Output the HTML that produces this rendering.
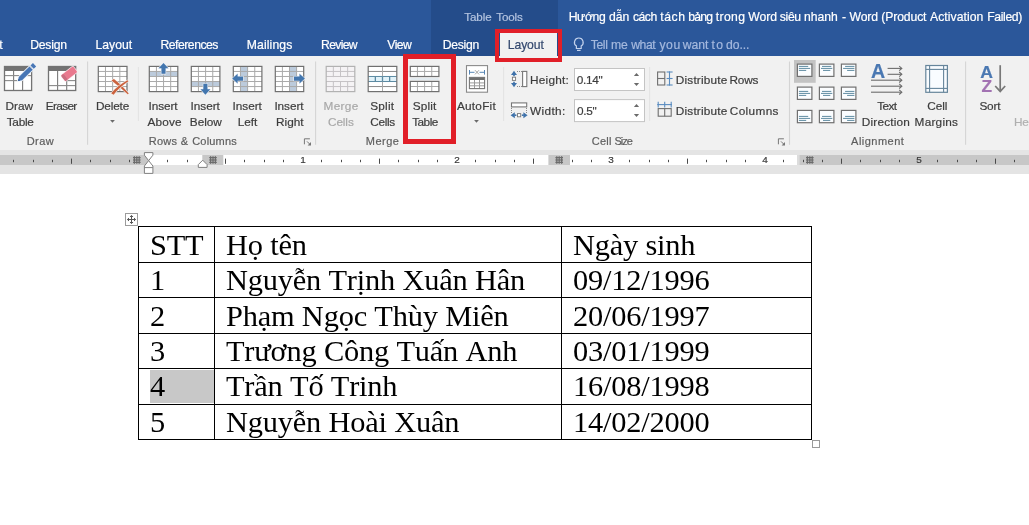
<!DOCTYPE html>
<html><head><meta charset="utf-8"><title>Word</title>
<style>
html,body{margin:0;padding:0}
body{width:1029px;height:525px;overflow:hidden;background:#fff;position:relative;font-family:"Liberation Sans",sans-serif;font-size:12px;color:#444}
.abs{position:absolute}
#title{left:0;top:0;width:1029px;height:56px;background:#2b579a}
#tt{left:430.5px;top:0;width:127.5px;height:56px;background:#244c8a}
#ribbon{left:0;top:56px;width:1029px;height:94px;background:#f1f1f1}
.l{position:absolute;white-space:pre;line-height:16px;height:16px;will-change:transform;-webkit-text-stroke:0.2px}
.rn{position:absolute;top:153.9px;width:20px;text-align:center;font-size:9.95px;line-height:11px;color:#3a3a3a;will-change:transform;-webkit-text-stroke:0.2px}
.ln{position:absolute;background:#000}
.c{position:absolute;white-space:pre;font-family:"Liberation Serif",serif;font-size:30.4px;letter-spacing:-0.19px;font-kerning:none;line-height:34px;color:#000;will-change:transform}
.red{position:absolute;border:5px solid #e11f28;box-sizing:border-box}
svg{position:absolute;left:0;top:0}
</style></head><body>
<div class="abs" id="title"></div>
<div class="abs" id="tt"></div>
<div class="abs" id="ribbon"></div>
<div class="abs" style="left:500px;top:33px;width:57px;height:24px;background:#f1f1f1"></div>
<svg width="1029" height="180" viewBox="0 0 1029 180">
<rect x="0" y="150" width="1029" height="24" fill="#e4e4e4"/>
<rect x="0" y="155" width="1029" height="10" fill="#fff"/>
<rect x="0" y="155" width="148.6" height="10" fill="#c7c7c7"/>
<rect x="202.3" y="155" width="21" height="10" fill="#c7c7c7"/>
<rect x="548.4" y="155" width="21.6" height="10" fill="#c7c7c7"/>
<rect x="799.2" y="155" width="231" height="10" fill="#c7c7c7"/>
<rect x="797" y="155" width="2.2" height="10" fill="#dcdcdc"/>
<rect x="13" y="159.8" width="1" height="2.4" fill="#4a4a4a"/>
<rect x="33" y="159.8" width="1" height="2.4" fill="#4a4a4a"/>
<rect x="52" y="159.8" width="1" height="2.4" fill="#4a4a4a"/>
<rect x="71" y="158.6" width="1" height="5.2" fill="#4a4a4a"/>
<rect x="90" y="159.8" width="1" height="2.4" fill="#4a4a4a"/>
<rect x="110" y="159.8" width="1" height="2.4" fill="#4a4a4a"/>
<rect x="129" y="159.8" width="1" height="2.4" fill="#4a4a4a"/>
<rect x="167" y="159.8" width="1" height="2.4" fill="#4a4a4a"/>
<rect x="187" y="159.8" width="1" height="2.4" fill="#4a4a4a"/>
<rect x="225" y="158.6" width="1" height="5.2" fill="#4a4a4a"/>
<rect x="244" y="159.8" width="1" height="2.4" fill="#4a4a4a"/>
<rect x="264" y="159.8" width="1" height="2.4" fill="#4a4a4a"/>
<rect x="283" y="159.8" width="1" height="2.4" fill="#4a4a4a"/>
<rect x="321" y="159.8" width="1" height="2.4" fill="#4a4a4a"/>
<rect x="341" y="159.8" width="1" height="2.4" fill="#4a4a4a"/>
<rect x="360" y="159.8" width="1" height="2.4" fill="#4a4a4a"/>
<rect x="379" y="158.6" width="1" height="5.2" fill="#4a4a4a"/>
<rect x="398" y="159.8" width="1" height="2.4" fill="#4a4a4a"/>
<rect x="418" y="159.8" width="1" height="2.4" fill="#4a4a4a"/>
<rect x="437" y="159.8" width="1" height="2.4" fill="#4a4a4a"/>
<rect x="475" y="159.8" width="1" height="2.4" fill="#4a4a4a"/>
<rect x="495" y="159.8" width="1" height="2.4" fill="#4a4a4a"/>
<rect x="514" y="159.8" width="1" height="2.4" fill="#4a4a4a"/>
<rect x="533" y="158.6" width="1" height="5.2" fill="#4a4a4a"/>
<rect x="572" y="159.8" width="1" height="2.4" fill="#4a4a4a"/>
<rect x="591" y="159.8" width="1" height="2.4" fill="#4a4a4a"/>
<rect x="629" y="159.8" width="1" height="2.4" fill="#4a4a4a"/>
<rect x="649" y="159.8" width="1" height="2.4" fill="#4a4a4a"/>
<rect x="668" y="159.8" width="1" height="2.4" fill="#4a4a4a"/>
<rect x="687" y="158.6" width="1" height="5.2" fill="#4a4a4a"/>
<rect x="706" y="159.8" width="1" height="2.4" fill="#4a4a4a"/>
<rect x="726" y="159.8" width="1" height="2.4" fill="#4a4a4a"/>
<rect x="745" y="159.8" width="1" height="2.4" fill="#4a4a4a"/>
<rect x="783" y="159.8" width="1" height="2.4" fill="#4a4a4a"/>
<rect x="803" y="159.8" width="1" height="2.4" fill="#4a4a4a"/>
<rect x="822" y="159.8" width="1" height="2.4" fill="#4a4a4a"/>
<rect x="841" y="158.6" width="1" height="5.2" fill="#4a4a4a"/>
<rect x="860" y="159.8" width="1" height="2.4" fill="#4a4a4a"/>
<rect x="880" y="159.8" width="1" height="2.4" fill="#4a4a4a"/>
<rect x="899" y="159.8" width="1" height="2.4" fill="#4a4a4a"/>
<rect x="937" y="159.8" width="1" height="2.4" fill="#4a4a4a"/>
<rect x="957" y="159.8" width="1" height="2.4" fill="#4a4a4a"/>
<rect x="976" y="159.8" width="1" height="2.4" fill="#4a4a4a"/>
<rect x="995" y="158.6" width="1" height="5.2" fill="#4a4a4a"/>
<rect x="1014" y="159.8" width="1" height="2.4" fill="#4a4a4a"/>
<line x1="134.4" y1="156.2" x2="134.4" y2="163.79999999999998" stroke="#6c6c6c" stroke-width="1.25"/>
<line x1="133" y1="157.6" x2="140.6" y2="157.6" stroke="#6c6c6c" stroke-width="1.25"/>
<line x1="136.8" y1="156.2" x2="136.8" y2="163.79999999999998" stroke="#6c6c6c" stroke-width="1.25"/>
<line x1="133" y1="160.0" x2="140.6" y2="160.0" stroke="#6c6c6c" stroke-width="1.25"/>
<line x1="139.20000000000002" y1="156.2" x2="139.20000000000002" y2="163.79999999999998" stroke="#6c6c6c" stroke-width="1.25"/>
<line x1="133" y1="162.4" x2="140.6" y2="162.4" stroke="#6c6c6c" stroke-width="1.25"/>
<line x1="210.6" y1="156.2" x2="210.6" y2="163.79999999999998" stroke="#6c6c6c" stroke-width="1.25"/>
<line x1="209.2" y1="157.6" x2="216.79999999999998" y2="157.6" stroke="#6c6c6c" stroke-width="1.25"/>
<line x1="213.0" y1="156.2" x2="213.0" y2="163.79999999999998" stroke="#6c6c6c" stroke-width="1.25"/>
<line x1="209.2" y1="160.0" x2="216.79999999999998" y2="160.0" stroke="#6c6c6c" stroke-width="1.25"/>
<line x1="215.4" y1="156.2" x2="215.4" y2="163.79999999999998" stroke="#6c6c6c" stroke-width="1.25"/>
<line x1="209.2" y1="162.4" x2="216.79999999999998" y2="162.4" stroke="#6c6c6c" stroke-width="1.25"/>
<line x1="556.8" y1="156.2" x2="556.8" y2="163.79999999999998" stroke="#6c6c6c" stroke-width="1.25"/>
<line x1="555.4" y1="157.6" x2="563.0" y2="157.6" stroke="#6c6c6c" stroke-width="1.25"/>
<line x1="559.1999999999999" y1="156.2" x2="559.1999999999999" y2="163.79999999999998" stroke="#6c6c6c" stroke-width="1.25"/>
<line x1="555.4" y1="160.0" x2="563.0" y2="160.0" stroke="#6c6c6c" stroke-width="1.25"/>
<line x1="561.5999999999999" y1="156.2" x2="561.5999999999999" y2="163.79999999999998" stroke="#6c6c6c" stroke-width="1.25"/>
<line x1="555.4" y1="162.4" x2="563.0" y2="162.4" stroke="#6c6c6c" stroke-width="1.25"/>
<line x1="807.4" y1="156.2" x2="807.4" y2="163.79999999999998" stroke="#6c6c6c" stroke-width="1.25"/>
<line x1="806" y1="157.6" x2="813.6" y2="157.6" stroke="#6c6c6c" stroke-width="1.25"/>
<line x1="809.8" y1="156.2" x2="809.8" y2="163.79999999999998" stroke="#6c6c6c" stroke-width="1.25"/>
<line x1="806" y1="160.0" x2="813.6" y2="160.0" stroke="#6c6c6c" stroke-width="1.25"/>
<line x1="812.1999999999999" y1="156.2" x2="812.1999999999999" y2="163.79999999999998" stroke="#6c6c6c" stroke-width="1.25"/>
<line x1="806" y1="162.4" x2="813.6" y2="162.4" stroke="#6c6c6c" stroke-width="1.25"/>
<path d="M144.4,152.6 L152.9,152.6 L152.9,155.2 L148.65,160.6 L152.9,166 L152.9,173.4 L144.4,173.4 L144.4,166 L148.65,160.6 L144.4,155.2 Z" fill="#fff" stroke="#808080" stroke-width="1"/>
<line x1="144.4" y1="167.6" x2="152.9" y2="167.6" stroke="#808080" stroke-width="1"/>
<path d="M198.3,167.4 L198.3,164.6 L202.7,160.2 L207.1,164.6 L207.1,167.4 Z" fill="#fff" stroke="#808080" stroke-width="1"/>
<rect x="4.5" y="66.5" width="27.1" height="24.0" fill="#fff" />
<rect x="4.5" y="66.5" width="27.1" height="4.5" fill="#737373" />
<line x1="13.6" y1="71" x2="13.6" y2="90.5" stroke="#7a7a7a" stroke-width="1.1" />
<line x1="22.6" y1="80" x2="22.6" y2="90.5" stroke="#7a7a7a" stroke-width="1.1" />
<line x1="4.5" y1="75.6" x2="20" y2="75.6" stroke="#8a8a8a" stroke-width="1.1" />
<line x1="27" y1="75.6" x2="31.6" y2="75.6" stroke="#8a8a8a" stroke-width="1.1" />
<line x1="4.5" y1="80.6" x2="17.5" y2="80.6" stroke="#8a8a8a" stroke-width="1.1" />
<rect x="4.5" y="66.5" width="27.1" height="24.0" fill="none" stroke="#737373" stroke-width="1.3" />
<g transform="translate(18,81) rotate(-44.5)"><path d="M0,0 L3.4,-2.3 L18.4,-2.3 L18.4,2.3 L3.4,2.3 Z" fill="#4876b5" stroke="#eef3f9" stroke-width="1.6" paint-order="stroke"/><rect x="19.8" y="-2.3" width="3.4" height="4.6" fill="#4876b5" stroke="#eef3f9" stroke-width="1.2" paint-order="stroke"/><path d="M0,0 L2,-1.3 L2,1.3 Z" fill="#2f5a96"/></g>
<rect x="48.5" y="66.5" width="27.200000000000003" height="24.0" fill="#fff" />
<rect x="48.5" y="66.5" width="27.200000000000003" height="4.5" fill="#737373" />
<line x1="57.6" y1="71" x2="57.6" y2="90.5" stroke="#7a7a7a" stroke-width="1.1" />
<line x1="66.7" y1="81" x2="66.7" y2="90.5" stroke="#7a7a7a" stroke-width="1.1" />
<line x1="66.7" y1="80.6" x2="75.7" y2="80.6" stroke="#8a8a8a" stroke-width="1.1" />
<line x1="48.5" y1="85.6" x2="75.7" y2="85.6" stroke="#8a8a8a" stroke-width="1.1" />
<rect x="48.5" y="66.5" width="27.200000000000003" height="24.0" fill="none" stroke="#737373" stroke-width="1.3" />
<g transform="translate(63.6,78.2) rotate(-38)"><rect x="-0.5" y="-3.6" width="15.2" height="7.2" rx="1.3" fill="#e9798e" stroke="#f8e9ed" stroke-width="1.4" paint-order="stroke"/><rect x="-0.5" y="-3.6" width="3" height="7.2" rx="1" fill="#c86f81"/></g>
<rect x="98.3" y="66.4" width="28.700000000000003" height="25.19999999999999" fill="#fff" />
<line x1="105.47" y1="66.4" x2="105.47" y2="91.6" stroke="#a9a9a9" stroke-width="1" />
<line x1="112.65" y1="66.4" x2="112.65" y2="91.6" stroke="#a9a9a9" stroke-width="1" />
<line x1="119.83" y1="66.4" x2="119.83" y2="91.6" stroke="#a9a9a9" stroke-width="1" />
<line x1="98.3" y1="71.44" x2="127" y2="71.44" stroke="#a9a9a9" stroke-width="1" />
<line x1="98.3" y1="76.48" x2="127" y2="76.48" stroke="#a9a9a9" stroke-width="1" />
<line x1="98.3" y1="81.52" x2="127" y2="81.52" stroke="#a9a9a9" stroke-width="1" />
<line x1="98.3" y1="86.56" x2="127" y2="86.56" stroke="#a9a9a9" stroke-width="1" />
<rect x="98.3" y="66.4" width="28.700000000000003" height="25.19999999999999" fill="none" stroke="#707070" stroke-width="1.2" />
<path d="M111.6,80.6 L113.9,78.9 C118.5,82.6 124.2,88 128.7,93.4 L127.8,94.3 C122.6,89.6 116.6,84.6 111.6,80.6 Z" fill="#cb623e" stroke="#f4ebe6" stroke-width="1.1" paint-order="stroke" stroke-linejoin="round"/>
<path d="M127.5,80.2 L128.4,81.2 C122.6,85 117.4,89.8 113.6,94.7 L111.2,93.2 C115.4,88.2 121.4,83.4 127.5,80.2 Z" fill="#cb623e" stroke="#f4ebe6" stroke-width="1.1" paint-order="stroke" stroke-linejoin="round"/>
<rect x="149.3" y="66.4" width="28.5" height="25.19999999999999" fill="#fff" />
<rect x="149.3" y="71.44" width="28.5" height="5.039999999999997" fill="#bccbdc" />
<line x1="156.43" y1="66.4" x2="156.43" y2="91.6" stroke="#a9a9a9" stroke-width="1" />
<line x1="163.55" y1="66.4" x2="163.55" y2="91.6" stroke="#a9a9a9" stroke-width="1" />
<line x1="170.68" y1="66.4" x2="170.68" y2="91.6" stroke="#a9a9a9" stroke-width="1" />
<line x1="149.3" y1="71.44" x2="177.8" y2="71.44" stroke="#a9a9a9" stroke-width="1" />
<line x1="149.3" y1="76.48" x2="177.8" y2="76.48" stroke="#a9a9a9" stroke-width="1" />
<line x1="149.3" y1="81.52" x2="177.8" y2="81.52" stroke="#a9a9a9" stroke-width="1" />
<line x1="149.3" y1="86.56" x2="177.8" y2="86.56" stroke="#a9a9a9" stroke-width="1" />
<rect x="149.3" y="66.4" width="28.5" height="25.19999999999999" fill="none" stroke="#707070" stroke-width="1.2" />
<g transform="translate(163.5,68.4) rotate(0)"><path d="M0,-5.5 L4.9,-0.1 L2.05,-0.1 L2.05,5.4 L-2.05,5.4 L-2.05,-0.1 L-4.9,-0.1 Z" fill="#4376ae" stroke="#eef2f7" stroke-width="1.2" stroke-linejoin="round" paint-order="stroke"/></g>
<rect x="191.3" y="66.4" width="28.599999999999994" height="25.19999999999999" fill="#fff" />
<rect x="191.3" y="81.52" width="28.599999999999994" height="5.039999999999997" fill="#bccbdc" />
<line x1="198.45" y1="66.4" x2="198.45" y2="91.6" stroke="#a9a9a9" stroke-width="1" />
<line x1="205.60" y1="66.4" x2="205.60" y2="91.6" stroke="#a9a9a9" stroke-width="1" />
<line x1="212.75" y1="66.4" x2="212.75" y2="91.6" stroke="#a9a9a9" stroke-width="1" />
<line x1="191.3" y1="71.44" x2="219.9" y2="71.44" stroke="#a9a9a9" stroke-width="1" />
<line x1="191.3" y1="76.48" x2="219.9" y2="76.48" stroke="#a9a9a9" stroke-width="1" />
<line x1="191.3" y1="81.52" x2="219.9" y2="81.52" stroke="#a9a9a9" stroke-width="1" />
<line x1="191.3" y1="86.56" x2="219.9" y2="86.56" stroke="#a9a9a9" stroke-width="1" />
<rect x="191.3" y="66.4" width="28.599999999999994" height="25.19999999999999" fill="none" stroke="#707070" stroke-width="1.2" />
<g transform="translate(205.4,89.2) rotate(180)"><path d="M0,-5.5 L4.9,-0.1 L2.05,-0.1 L2.05,5.4 L-2.05,5.4 L-2.05,-0.1 L-4.9,-0.1 Z" fill="#4376ae" stroke="#eef2f7" stroke-width="1.2" stroke-linejoin="round" paint-order="stroke"/></g>
<rect x="233.3" y="66.4" width="28.599999999999966" height="25.19999999999999" fill="#fff" />
<rect x="240.45" y="66.4" width="7.1499999999999915" height="25.19999999999999" fill="#bccbdc" />
<line x1="240.45" y1="66.4" x2="240.45" y2="91.6" stroke="#a9a9a9" stroke-width="1" />
<line x1="247.60" y1="66.4" x2="247.60" y2="91.6" stroke="#a9a9a9" stroke-width="1" />
<line x1="254.75" y1="66.4" x2="254.75" y2="91.6" stroke="#a9a9a9" stroke-width="1" />
<line x1="233.3" y1="71.44" x2="261.9" y2="71.44" stroke="#a9a9a9" stroke-width="1" />
<line x1="233.3" y1="76.48" x2="261.9" y2="76.48" stroke="#a9a9a9" stroke-width="1" />
<line x1="233.3" y1="81.52" x2="261.9" y2="81.52" stroke="#a9a9a9" stroke-width="1" />
<line x1="233.3" y1="86.56" x2="261.9" y2="86.56" stroke="#a9a9a9" stroke-width="1" />
<rect x="233.3" y="66.4" width="28.599999999999966" height="25.19999999999999" fill="none" stroke="#707070" stroke-width="1.2" />
<g transform="translate(237.7,78.6) rotate(-90)"><path d="M0,-5.5 L4.9,-0.1 L2.05,-0.1 L2.05,5.4 L-2.05,5.4 L-2.05,-0.1 L-4.9,-0.1 Z" fill="#4376ae" stroke="#eef2f7" stroke-width="1.2" stroke-linejoin="round" paint-order="stroke"/></g>
<rect x="275.3" y="66.4" width="28.399999999999977" height="25.19999999999999" fill="#fff" />
<rect x="289.5" y="66.4" width="7.099999999999994" height="25.19999999999999" fill="#bccbdc" />
<line x1="282.40" y1="66.4" x2="282.40" y2="91.6" stroke="#a9a9a9" stroke-width="1" />
<line x1="289.50" y1="66.4" x2="289.50" y2="91.6" stroke="#a9a9a9" stroke-width="1" />
<line x1="296.60" y1="66.4" x2="296.60" y2="91.6" stroke="#a9a9a9" stroke-width="1" />
<line x1="275.3" y1="71.44" x2="303.7" y2="71.44" stroke="#a9a9a9" stroke-width="1" />
<line x1="275.3" y1="76.48" x2="303.7" y2="76.48" stroke="#a9a9a9" stroke-width="1" />
<line x1="275.3" y1="81.52" x2="303.7" y2="81.52" stroke="#a9a9a9" stroke-width="1" />
<line x1="275.3" y1="86.56" x2="303.7" y2="86.56" stroke="#a9a9a9" stroke-width="1" />
<rect x="275.3" y="66.4" width="28.399999999999977" height="25.19999999999999" fill="none" stroke="#707070" stroke-width="1.2" />
<g transform="translate(299.4,78.6) rotate(90)"><path d="M0,-5.5 L4.9,-0.1 L2.05,-0.1 L2.05,5.4 L-2.05,5.4 L-2.05,-0.1 L-4.9,-0.1 Z" fill="#4376ae" stroke="#eef2f7" stroke-width="1.2" stroke-linejoin="round" paint-order="stroke"/></g>
<rect x="326.2" y="66.4" width="28.600000000000023" height="25.19999999999999" fill="#f5f3f5" />
<line x1="333.35" y1="66.4" x2="333.35" y2="91.6" stroke="#c6c3c6" stroke-width="1" />
<line x1="340.50" y1="66.4" x2="340.50" y2="91.6" stroke="#c6c3c6" stroke-width="1" />
<line x1="347.65" y1="66.4" x2="347.65" y2="91.6" stroke="#c6c3c6" stroke-width="1" />
<line x1="326.2" y1="71.44" x2="354.8" y2="71.44" stroke="#c6c3c6" stroke-width="1" />
<line x1="326.2" y1="76.48" x2="354.8" y2="76.48" stroke="#c6c3c6" stroke-width="1" />
<line x1="326.2" y1="81.52" x2="354.8" y2="81.52" stroke="#c6c3c6" stroke-width="1" />
<line x1="326.2" y1="86.56" x2="354.8" y2="86.56" stroke="#c6c3c6" stroke-width="1" />
<rect x="326.2" y="66.4" width="28.600000000000023" height="25.19999999999999" fill="none" stroke="#b2b2b2" stroke-width="1.2" />
<rect x="326.9" y="77.1" width="27.2" height="3.9" fill="#f5f3f5" />
<rect x="368.2" y="66.4" width="28.600000000000023" height="25.19999999999999" fill="#fff" />
<rect x="368.2" y="76.48" width="28.600000000000023" height="5.039999999999997" fill="#e2f3fa" />
<line x1="368.2" y1="71.44" x2="396.8" y2="71.44" stroke="#8a8a8a" stroke-width="1" />
<line x1="368.2" y1="76.48" x2="396.8" y2="76.48" stroke="#5b8aa2" stroke-width="1" />
<line x1="368.2" y1="81.52" x2="396.8" y2="81.52" stroke="#5b8aa2" stroke-width="1" />
<line x1="368.2" y1="86.56" x2="396.8" y2="86.56" stroke="#8a8a8a" stroke-width="1" />
<line x1="382.5" y1="66.4" x2="382.5" y2="76.48" stroke="#a9a9a9" stroke-width="1" />
<line x1="382.5" y1="81.52" x2="382.5" y2="91.6" stroke="#a9a9a9" stroke-width="1" />
<line x1="375.35" y1="76.48" x2="375.35" y2="81.52" stroke="#5b8aa2" stroke-width="1.3" />
<line x1="382.50" y1="76.48" x2="382.50" y2="81.52" stroke="#5b8aa2" stroke-width="1.3" />
<line x1="389.65" y1="76.48" x2="389.65" y2="81.52" stroke="#5b8aa2" stroke-width="1.3" />
<rect x="368.2" y="66.4" width="28.600000000000023" height="25.19999999999999" fill="none" stroke="#707070" stroke-width="1.2" />
<rect x="410.3" y="66.4" width="28.599999999999966" height="10.099999999999994" fill="#fff" />
<line x1="417.45" y1="66.4" x2="417.45" y2="76.5" stroke="#a9a9a9" stroke-width="1" />
<line x1="424.60" y1="66.4" x2="424.60" y2="76.5" stroke="#a9a9a9" stroke-width="1" />
<line x1="431.75" y1="66.4" x2="431.75" y2="76.5" stroke="#a9a9a9" stroke-width="1" />
<line x1="410.3" y1="71.45" x2="438.9" y2="71.45" stroke="#a9a9a9" stroke-width="1" />
<rect x="410.3" y="66.4" width="28.599999999999966" height="10.099999999999994" fill="none" stroke="#707070" stroke-width="1.2" />
<rect x="410.3" y="81.4" width="28.599999999999966" height="10.199999999999989" fill="#fff" />
<line x1="417.45" y1="81.4" x2="417.45" y2="91.6" stroke="#a9a9a9" stroke-width="1" />
<line x1="424.60" y1="81.4" x2="424.60" y2="91.6" stroke="#a9a9a9" stroke-width="1" />
<line x1="431.75" y1="81.4" x2="431.75" y2="91.6" stroke="#a9a9a9" stroke-width="1" />
<line x1="410.3" y1="86.50" x2="438.9" y2="86.50" stroke="#a9a9a9" stroke-width="1" />
<rect x="410.3" y="81.4" width="28.599999999999966" height="10.199999999999989" fill="none" stroke="#707070" stroke-width="1.2" />
<line x1="410.5" y1="79" x2="438.7" y2="79" stroke="#dbe7f0" stroke-width="1.2" />
<rect x="466.5" y="65.6" width="21" height="26.6" fill="#fff" stroke="#8a8a8a" stroke-width="1.1" />
<line x1="469.5" y1="70" x2="469.5" y2="74.6" stroke="#5786b4" stroke-width="1" />
<line x1="484.5" y1="70" x2="484.5" y2="74.6" stroke="#5786b4" stroke-width="1" />
<line x1="469.5" y1="72.3" x2="474.5" y2="72.3" stroke="#5786b4" stroke-width="1" />
<line x1="479.5" y1="72.3" x2="484.5" y2="72.3" stroke="#5786b4" stroke-width="1" />
<line x1="475" y1="70.2" x2="479" y2="74.4" stroke="#9a9a9a" stroke-width="0.9" />
<line x1="479" y1="70.2" x2="475" y2="74.4" stroke="#9a9a9a" stroke-width="0.9" />
<rect x="469.4" y="77.4" width="15.2" height="11.2" fill="#fff" />
<rect x="469.4" y="77.4" width="15.2" height="2.6" fill="#6f6f6f" />
<line x1="474.5" y1="80" x2="474.5" y2="88.6" stroke="#9a9a9a" stroke-width="1" />
<line x1="479.5" y1="80" x2="479.5" y2="88.6" stroke="#9a9a9a" stroke-width="1" />
<line x1="469.4" y1="82.9" x2="484.6" y2="82.9" stroke="#9a9a9a" stroke-width="1" />
<line x1="469.4" y1="85.8" x2="484.6" y2="85.8" stroke="#9a9a9a" stroke-width="1" />
<rect x="469.4" y="77.4" width="15.2" height="11.2" fill="none" stroke="#777" stroke-width="1.1" />
<path d="M110.1,119.89999999999999 L114.9,119.89999999999999 L112.5,122.7 Z" fill="#6a6a6a" />
<path d="M474.1,119.89999999999999 L478.9,119.89999999999999 L476.5,122.7 Z" fill="#6a6a6a" />
<path d="M514,70.8 L517,74.9 L511,74.9 Z" fill="#3f72aa" />
<line x1="514" y1="74.5" x2="514" y2="76.2" stroke="#3f72aa" stroke-width="1.6" />
<path d="M514,87.2 L517,83.1 L511,83.1 Z" fill="#3f72aa" />
<line x1="514" y1="81.8" x2="514" y2="83.5" stroke="#3f72aa" stroke-width="1.6" />
<rect x="512.4" y="77.2" width="3.2" height="3.2" fill="#fff" stroke="#777" stroke-width="0.9" />
<line x1="517" y1="71.5" x2="522" y2="71.5" stroke="#8a8a8a" stroke-width="1" stroke-dasharray="1 1" shape-rendering="crispEdges"/>
<line x1="517" y1="86.5" x2="522" y2="86.5" stroke="#8a8a8a" stroke-width="1" stroke-dasharray="1 1" shape-rendering="crispEdges"/>
<rect x="522.6" y="71.4" width="4.2" height="15.2" fill="#fff" stroke="#777" stroke-width="1.1" />
<rect x="511.5" y="102.9" width="15.2" height="4" fill="#fff" stroke="#777" stroke-width="1.1" />
<line x1="511.5" y1="108" x2="511.5" y2="113" stroke="#8a8a8a" stroke-width="1" stroke-dasharray="1 1" shape-rendering="crispEdges"/>
<line x1="526.5" y1="108" x2="526.5" y2="113" stroke="#8a8a8a" stroke-width="1" stroke-dasharray="1 1" shape-rendering="crispEdges"/>
<path d="M510.6,115.2 L514.8,112.2 L514.8,118.2 Z" fill="#3f72aa" />
<line x1="514.4" y1="115.2" x2="516.4" y2="115.2" stroke="#3f72aa" stroke-width="1.6" />
<path d="M527.6,115.2 L523.4,112.2 L523.4,118.2 Z" fill="#3f72aa" />
<line x1="521.8" y1="115.2" x2="523.8" y2="115.2" stroke="#3f72aa" stroke-width="1.6" />
<rect x="517.5" y="113.6" width="3.2" height="3.2" fill="#fff" stroke="#777" stroke-width="0.9" />
<rect x="574.5" y="68.5" width="70" height="22" fill="#fff" stroke="#c4c4c4" stroke-width="1" />
<rect x="574.5" y="99.6" width="70" height="22" fill="#fff" stroke="#c4c4c4" stroke-width="1" />
<path d="M633.9,76.0 L636.5,73.0 L639.1,76.0 Z" fill="#6a6a6a" />
<path d="M633.9,107.10000000000001 L636.5,104.10000000000001 L639.1,107.10000000000001 Z" fill="#6a6a6a" />
<path d="M633.9,83.0 L636.5,86.0 L639.1,83.0 Z" fill="#6a6a6a" />
<path d="M633.9,114.1 L636.5,117.1 L639.1,114.1 Z" fill="#6a6a6a" />
<rect x="657.6" y="72" width="7.2" height="13" fill="none" stroke="#6f6f6f" stroke-width="1.1" />
<line x1="657.6" y1="78.5" x2="664.8" y2="78.5" stroke="#6f6f6f" stroke-width="1.1" />
<line x1="669.5" y1="71.4" x2="669.5" y2="85.6" stroke="#5a8cc0" stroke-width="1.1" />
<line x1="666.6" y1="72" x2="672.6" y2="72" stroke="#5a8cc0" stroke-width="1.1" />
<line x1="666.6" y1="78.5" x2="672.6" y2="78.5" stroke="#5a8cc0" stroke-width="1.1" />
<line x1="666.6" y1="85" x2="672.6" y2="85" stroke="#5a8cc0" stroke-width="1.1" />
<rect x="658.2" y="108.6" width="13" height="7.6" fill="none" stroke="#6f6f6f" stroke-width="1.1" />
<line x1="664.7" y1="108.6" x2="664.7" y2="116.2" stroke="#6f6f6f" stroke-width="1.1" />
<line x1="657.2" y1="104.6" x2="672" y2="104.6" stroke="#5a8cc0" stroke-width="1.1" />
<line x1="658.2" y1="101.8" x2="658.2" y2="107.6" stroke="#5a8cc0" stroke-width="1.1" />
<line x1="664.7" y1="101.8" x2="664.7" y2="107.6" stroke="#5a8cc0" stroke-width="1.1" />
<line x1="671.2" y1="101.8" x2="671.2" y2="107.6" stroke="#5a8cc0" stroke-width="1.1" />
<path d="M304.4,144.3 L304.4,138.8 L309.9,138.8" fill="none" stroke="#777" stroke-width="1" />
<path d="M307.0,141.4 L310.4,144.8" fill="none" stroke="#777" stroke-width="1" />
<path d="M311.0,142.0 L311.0,145.4 L307.59999999999997,145.4 Z" fill="#777" />
<path d="M778.4,144.3 L778.4,138.8 L783.9,138.8" fill="none" stroke="#777" stroke-width="1" />
<path d="M781.0,141.4 L784.4,144.8" fill="none" stroke="#777" stroke-width="1" />
<path d="M785.0,142.0 L785.0,145.4 L781.6,145.4 Z" fill="#777" />
<rect x="794" y="60" width="21.7" height="22.8" fill="#c3c3c3" />
<rect x="797.4" y="64.1" width="14.5" height="12.3" fill="#fbfdff" stroke="#707070" stroke-width="1.2" />
<line x1="798.90" y1="66.40" x2="808.20" y2="66.40" stroke="#5f8ba1" stroke-width="1.0" />
<line x1="798.90" y1="68.40" x2="810.20" y2="68.40" stroke="#5f8ba1" stroke-width="1.0" />
<line x1="798.90" y1="70.40" x2="806.20" y2="70.40" stroke="#5f8ba1" stroke-width="1.0" />
<rect x="797.4" y="87.1" width="14.5" height="12.3" fill="#fbfdff" stroke="#707070" stroke-width="1.2" />
<line x1="798.90" y1="91.40" x2="808.20" y2="91.40" stroke="#5f8ba1" stroke-width="1.0" />
<line x1="798.90" y1="93.40" x2="810.20" y2="93.40" stroke="#5f8ba1" stroke-width="1.0" />
<line x1="798.90" y1="95.40" x2="806.20" y2="95.40" stroke="#5f8ba1" stroke-width="1.0" />
<rect x="797.4" y="110.4" width="14.5" height="12.3" fill="#fbfdff" stroke="#707070" stroke-width="1.2" />
<line x1="798.90" y1="116.40" x2="808.20" y2="116.40" stroke="#5f8ba1" stroke-width="1.0" />
<line x1="798.90" y1="118.40" x2="810.20" y2="118.40" stroke="#5f8ba1" stroke-width="1.0" />
<line x1="798.90" y1="120.40" x2="806.20" y2="120.40" stroke="#5f8ba1" stroke-width="1.0" />
<rect x="819.4" y="64.1" width="14.5" height="12.3" fill="#fbfdff" stroke="#707070" stroke-width="1.2" />
<line x1="822.00" y1="66.40" x2="831.30" y2="66.40" stroke="#5f8ba1" stroke-width="1.0" />
<line x1="821.00" y1="68.40" x2="832.30" y2="68.40" stroke="#5f8ba1" stroke-width="1.0" />
<line x1="823.00" y1="70.40" x2="830.30" y2="70.40" stroke="#5f8ba1" stroke-width="1.0" />
<rect x="819.4" y="87.1" width="14.5" height="12.3" fill="#fbfdff" stroke="#707070" stroke-width="1.2" />
<line x1="822.00" y1="91.40" x2="831.30" y2="91.40" stroke="#5f8ba1" stroke-width="1.0" />
<line x1="821.00" y1="93.40" x2="832.30" y2="93.40" stroke="#5f8ba1" stroke-width="1.0" />
<line x1="823.00" y1="95.40" x2="830.30" y2="95.40" stroke="#5f8ba1" stroke-width="1.0" />
<rect x="819.4" y="110.4" width="14.5" height="12.3" fill="#fbfdff" stroke="#707070" stroke-width="1.2" />
<line x1="822.00" y1="116.40" x2="831.30" y2="116.40" stroke="#5f8ba1" stroke-width="1.0" />
<line x1="821.00" y1="118.40" x2="832.30" y2="118.40" stroke="#5f8ba1" stroke-width="1.0" />
<line x1="823.00" y1="120.40" x2="830.30" y2="120.40" stroke="#5f8ba1" stroke-width="1.0" />
<rect x="841.4" y="64.1" width="14.5" height="12.3" fill="#fbfdff" stroke="#707070" stroke-width="1.2" />
<line x1="845.10" y1="66.40" x2="854.40" y2="66.40" stroke="#5f8ba1" stroke-width="1.0" />
<line x1="843.10" y1="68.40" x2="854.40" y2="68.40" stroke="#5f8ba1" stroke-width="1.0" />
<line x1="847.10" y1="70.40" x2="854.40" y2="70.40" stroke="#5f8ba1" stroke-width="1.0" />
<rect x="841.4" y="87.1" width="14.5" height="12.3" fill="#fbfdff" stroke="#707070" stroke-width="1.2" />
<line x1="845.10" y1="91.40" x2="854.40" y2="91.40" stroke="#5f8ba1" stroke-width="1.0" />
<line x1="843.10" y1="93.40" x2="854.40" y2="93.40" stroke="#5f8ba1" stroke-width="1.0" />
<line x1="847.10" y1="95.40" x2="854.40" y2="95.40" stroke="#5f8ba1" stroke-width="1.0" />
<rect x="841.4" y="110.4" width="14.5" height="12.3" fill="#fbfdff" stroke="#707070" stroke-width="1.2" />
<line x1="845.10" y1="116.40" x2="854.40" y2="116.40" stroke="#5f8ba1" stroke-width="1.0" />
<line x1="843.10" y1="118.40" x2="854.40" y2="118.40" stroke="#5f8ba1" stroke-width="1.0" />
<line x1="847.10" y1="120.40" x2="854.40" y2="120.40" stroke="#5f8ba1" stroke-width="1.0" />
<line x1="887.6" y1="68.4" x2="901.6" y2="68.4" stroke="#6c6c6c" stroke-width="1.1" />
<path d="M899.2,66.10000000000001 L901.8,68.4 L899.2,70.7" fill="none" stroke="#6c6c6c" stroke-width="1.1" />
<line x1="887.6" y1="74.3" x2="901.6" y2="74.3" stroke="#6c6c6c" stroke-width="1.1" />
<path d="M899.2,72.0 L901.8,74.3 L899.2,76.6" fill="none" stroke="#6c6c6c" stroke-width="1.1" />
<line x1="871" y1="80.2" x2="901.6" y2="80.2" stroke="#6c6c6c" stroke-width="1.1" />
<path d="M899.2,77.9 L901.8,80.2 L899.2,82.5" fill="none" stroke="#6c6c6c" stroke-width="1.1" />
<line x1="871" y1="86.2" x2="901.6" y2="86.2" stroke="#6c6c6c" stroke-width="1.1" />
<path d="M899.2,83.9 L901.8,86.2 L899.2,88.5" fill="none" stroke="#6c6c6c" stroke-width="1.1" />
<line x1="871" y1="92.2" x2="901.6" y2="92.2" stroke="#6c6c6c" stroke-width="1.1" />
<path d="M899.2,89.9 L901.8,92.2 L899.2,94.5" fill="none" stroke="#6c6c6c" stroke-width="1.1" />
<rect x="925.8" y="65.5" width="21.6" height="26.8" fill="#f9fcff" stroke="#66859b" stroke-width="1.2" />
<line x1="929.6" y1="65.5" x2="929.6" y2="92.3" stroke="#66859b" stroke-width="1.1" />
<line x1="943.6" y1="65.5" x2="943.6" y2="92.3" stroke="#66859b" stroke-width="1.1" />
<line x1="925.8" y1="69.4" x2="947.4" y2="69.4" stroke="#66859b" stroke-width="1.1" />
<line x1="925.8" y1="88.4" x2="947.4" y2="88.4" stroke="#66859b" stroke-width="1.1" />
<line x1="1000.2" y1="65.2" x2="1000.2" y2="91" stroke="#787878" stroke-width="1.7" />
<path d="M995.2,86 L1000.2,91.4 L1005.2,86" fill="none" stroke="#787878" stroke-width="1.7" />
<line x1="87.6" y1="61.5" x2="87.6" y2="144.8" stroke="#d4d4d4" stroke-width="1.1" />
<line x1="315.6" y1="61.5" x2="315.6" y2="144.8" stroke="#d4d4d4" stroke-width="1.1" />
<line x1="789.5" y1="61.5" x2="789.5" y2="144.8" stroke="#d4d4d4" stroke-width="1.1" />
<line x1="965.6" y1="61.5" x2="965.6" y2="144.8" stroke="#d4d4d4" stroke-width="1.1" />
<line x1="138.4" y1="67" x2="138.4" y2="121" stroke="#e3e3e3" stroke-width="1.1" />
<line x1="503.6" y1="67" x2="503.6" y2="121" stroke="#e3e3e3" stroke-width="1.1" />
<line x1="649.6" y1="67" x2="649.6" y2="121" stroke="#e3e3e3" stroke-width="1.1" />
<path d="M578.8,38 a4.3,4.3 0 0 1 2.4,7.9 l0,2.6 l-4.8,0 l0,-2.6 a4.3,4.3 0 0 1 2.4,-7.9 Z" fill="none" stroke="#c3d2ec" stroke-width="1.2" />
<line x1="577" y1="50.4" x2="580.6" y2="50.4" stroke="#c3d2ec" stroke-width="1.2" />
</svg>
<div class="rn" style="left:292.6px">1</div>
<div class="rn" style="left:446.6px">2</div>
<div class="rn" style="left:600.6px">3</div>
<div class="rn" style="left:754.6px">4</div>
<div class="rn" style="left:908.6px">5</div>
<div class="l" style="left:-1px;padding-left:0.20px;top:36.77px;font-size:12.2px;letter-spacing:-0.300px;color:#fff">t</div>
<div class="l" style="left:30px;padding-left:0.27px;top:36.77px;font-size:12.2px;letter-spacing:-0.243px;color:#fff">Design</div>
<div class="l" style="left:95px;padding-left:0.58px;top:36.77px;font-size:12.2px;letter-spacing:-0.023px;color:#fff">Layout</div>
<div class="l" style="left:160px;padding-left:0.50px;top:36.77px;font-size:12.2px;letter-spacing:-0.490px;color:#fff">References</div>
<div class="l" style="left:246px;padding-left:0.70px;top:36.77px;font-size:12.2px;letter-spacing:0.129px;color:#fff">Mailings</div>
<div class="l" style="left:321px;padding-left:0.10px;top:36.77px;font-size:12.2px;letter-spacing:-0.711px;color:#fff">Review</div>
<div class="l" style="left:387px;padding-left:0.26px;top:36.77px;font-size:12.2px;letter-spacing:-0.525px;color:#fff">View</div>
<div class="l" style="left:442px;padding-left:0.76px;top:36.77px;font-size:12.2px;letter-spacing:-0.270px;color:#fff">Design</div>
<div class="l" style="left:507px;padding-left:0.82px;top:36.77px;font-size:12.2px;letter-spacing:-0.113px;color:#34486e">Layout</div>
<div class="l" style="left:590px;padding-left:0.74px;top:36.77px;font-size:12.2px;letter-spacing:-0.390px;color:#a5b9de">Tell</div>
<div class="l" style="left:610px;padding-left:0.95px;top:36.77px;font-size:12.2px;letter-spacing:-0.113px;color:#a5b9de">me</div>
<div class="l" style="left:631px;padding-left:0.16px;top:36.77px;font-size:12.2px;letter-spacing:-0.397px;color:#a5b9de">what</div>
<div class="l" style="left:659px;padding-left:0.55px;top:36.77px;font-size:12.2px;letter-spacing:0.484px;color:#a5b9de">you</div>
<div class="l" style="left:682px;padding-left:0.77px;top:36.77px;font-size:12.2px;letter-spacing:-0.030px;color:#a5b9de">want</div>
<div class="l" style="left:711px;padding-left:0.39px;top:36.77px;font-size:12.2px;letter-spacing:1.462px;color:#a5b9de">to</div>
<div class="l" style="left:726px;padding-left:0.05px;top:36.77px;font-size:12.2px;letter-spacing:-0.068px;color:#a5b9de">do...</div>
<div class="l" style="left:568px;padding-left:0.71px;top:8.97px;font-size:12.2px;letter-spacing:-0.388px;color:#fff">Hướng</div>
<div class="l" style="left:608px;padding-left:0.97px;top:8.97px;font-size:12.2px;letter-spacing:0.023px;color:#fff">dẫn</div>
<div class="l" style="left:632px;padding-left:0.89px;top:8.97px;font-size:12.2px;letter-spacing:-0.487px;color:#fff">cách</div>
<div class="l" style="left:660px;padding-left:0.33px;top:8.97px;font-size:12.2px;letter-spacing:0.525px;color:#fff">tách</div>
<div class="l" style="left:688px;padding-left:0.24px;top:8.97px;font-size:12.2px;letter-spacing:-0.765px;color:#fff">bảng</div>
<div class="l" style="left:715px;padding-left:0.87px;top:8.97px;font-size:12.2px;letter-spacing:0.332px;color:#fff">trong</div>
<div class="l" style="left:748px;padding-left:0.24px;top:8.97px;font-size:12.2px;letter-spacing:-0.053px;color:#fff">Word</div>
<div class="l" style="left:779px;padding-left:0.84px;top:8.97px;font-size:12.2px;letter-spacing:-0.368px;color:#fff">siêu</div>
<div class="l" style="left:804px;padding-left:0.05px;top:8.97px;font-size:12.2px;letter-spacing:-0.067px;color:#fff">nhanh</div>
<div class="l" style="left:841px;padding-left:0.91px;top:8.97px;font-size:12.2px;letter-spacing:0.000px;color:#fff">-</div>
<div class="l" style="left:849px;padding-left:0.51px;top:8.97px;font-size:12.2px;letter-spacing:-0.112px;color:#fff">Word</div>
<div class="l" style="left:881px;padding-left:0.36px;top:8.97px;font-size:12.2px;letter-spacing:-0.135px;color:#fff">(Product</div>
<div class="l" style="left:930px;padding-left:0.04px;top:8.97px;font-size:12.2px;letter-spacing:0.055px;color:#fff">Activation</div>
<div class="l" style="left:987px;padding-left:0.17px;top:8.97px;font-size:12.2px;letter-spacing:-0.345px;color:#fff">Failed)</div>
<div class="l" style="left:464px;padding-left:0.16px;top:8.58px;font-size:11.6px;letter-spacing:-0.045px;color:#b4c4e0">Table</div>
<div class="l" style="left:496px;padding-left:0.24px;top:8.58px;font-size:11.6px;letter-spacing:-0.124px;color:#b4c4e0">Tools</div>
<div class="l" style="left:5px;padding-left:0.53px;top:97.91px;font-size:11.8px;letter-spacing:-0.030px;color:#3c3c3c">Draw</div>
<div class="l" style="left:6px;padding-left:0.74px;top:113.91px;font-size:11.8px;letter-spacing:-0.264px;color:#3c3c3c">Table</div>
<div class="l" style="left:45px;padding-left:0.69px;top:97.91px;font-size:11.8px;letter-spacing:-0.635px;color:#3c3c3c">Eraser</div>
<div class="l" style="left:95px;padding-left:0.91px;top:97.91px;font-size:11.8px;letter-spacing:-0.148px;color:#3c3c3c">Delete</div>
<div class="l" style="left:148px;padding-left:0.50px;top:97.91px;font-size:11.8px;letter-spacing:-0.072px;color:#3c3c3c">Insert</div>
<div class="l" style="left:147px;padding-left:0.50px;top:113.91px;font-size:11.8px;letter-spacing:0.135px;color:#3c3c3c">Above</div>
<div class="l" style="left:190px;padding-left:0.56px;top:97.91px;font-size:11.8px;letter-spacing:-0.049px;color:#3c3c3c">Insert</div>
<div class="l" style="left:189px;padding-left:0.84px;top:113.91px;font-size:11.8px;letter-spacing:-0.051px;color:#3c3c3c">Below</div>
<div class="l" style="left:232px;padding-left:0.56px;top:97.91px;font-size:11.8px;letter-spacing:-0.049px;color:#3c3c3c">Insert</div>
<div class="l" style="left:237px;padding-left:0.80px;top:113.91px;font-size:11.8px;letter-spacing:-0.090px;color:#3c3c3c">Left</div>
<div class="l" style="left:274px;padding-left:0.43px;top:97.91px;font-size:11.8px;letter-spacing:-0.076px;color:#3c3c3c">Insert</div>
<div class="l" style="left:275px;padding-left:1.00px;top:113.91px;font-size:11.8px;letter-spacing:0.023px;color:#3c3c3c">Right</div>
<div class="l" style="left:323px;padding-left:0.61px;top:97.91px;font-size:11.8px;letter-spacing:0.298px;color:#a8a8a8">Merge</div>
<div class="l" style="left:327px;padding-left:0.98px;top:113.91px;font-size:11.8px;letter-spacing:-0.101px;color:#a8a8a8">Cells</div>
<div class="l" style="left:370px;padding-left:0.19px;top:97.91px;font-size:11.8px;letter-spacing:0.248px;color:#3c3c3c">Split</div>
<div class="l" style="left:370px;padding-left:0.27px;top:113.91px;font-size:11.8px;letter-spacing:-0.304px;color:#3c3c3c">Cells</div>
<div class="l" style="left:412px;padding-left:0.68px;top:97.91px;font-size:11.8px;letter-spacing:0.158px;color:#3c3c3c">Split</div>
<div class="l" style="left:412px;padding-left:0.15px;top:113.91px;font-size:11.8px;letter-spacing:-0.501px;color:#3c3c3c">Table</div>
<div class="l" style="left:456px;padding-left:0.94px;top:97.91px;font-size:11.8px;letter-spacing:0.240px;color:#3c3c3c">AutoFit</div>
<div class="l" style="left:530px;padding-left:0.01px;top:71.91px;font-size:11.8px;letter-spacing:0.244px;color:#3c3c3c">Height:</div>
<div class="l" style="left:530px;padding-left:0.12px;top:102.91px;font-size:11.8px;letter-spacing:0.333px;color:#3c3c3c">Width:</div>
<div class="l" style="left:576px;padding-left:0.75px;top:71.91px;font-size:11.8px;letter-spacing:-0.287px;color:#3c3c3c">0.14&quot;</div>
<div class="l" style="left:576px;padding-left:0.94px;top:102.91px;font-size:11.8px;letter-spacing:-0.270px;color:#3c3c3c">0.5&quot;</div>
<div class="l" style="left:675px;padding-left:0.79px;top:71.91px;font-size:11.8px;letter-spacing:0.192px;color:#3c3c3c">Distribute</div>
<div class="l" style="left:729px;padding-left:0.62px;top:71.91px;font-size:11.8px;letter-spacing:-0.270px;color:#3c3c3c">Rows</div>
<div class="l" style="left:675px;padding-left:0.79px;top:102.91px;font-size:11.8px;letter-spacing:0.192px;color:#3c3c3c">Distribute</div>
<div class="l" style="left:729px;padding-left:0.83px;top:102.91px;font-size:11.8px;letter-spacing:0.356px;color:#3c3c3c">Columns</div>
<div class="l" style="left:877px;padding-left:0.15px;top:97.91px;font-size:11.8px;letter-spacing:-0.592px;color:#3c3c3c">Text</div>
<div class="l" style="left:861px;padding-left:0.78px;top:113.91px;font-size:11.8px;letter-spacing:0.200px;color:#3c3c3c">Direction</div>
<div class="l" style="left:927px;padding-left:0.16px;top:97.91px;font-size:11.8px;letter-spacing:-0.023px;color:#3c3c3c">Cell</div>
<div class="l" style="left:914px;padding-left:0.60px;top:113.91px;font-size:11.8px;letter-spacing:0.233px;color:#3c3c3c">Margins</div>
<div class="l" style="left:979px;padding-left:0.46px;top:97.91px;font-size:11.8px;letter-spacing:-0.217px;color:#3c3c3c">Sort</div>
<div class="l" style="left:1013px;padding-left:0.92px;top:113.91px;font-size:11.8px;letter-spacing:-0.300px;color:#b0b0b0">He</div>
<div class="l" style="left:26px;padding-left:0.69px;top:133.19px;font-size:11px;letter-spacing:0.480px;color:#5e5e5e">Draw</div>
<div class="l" style="left:148px;padding-left:0.84px;top:133.19px;font-size:11px;letter-spacing:0.195px;color:#5e5e5e">Rows</div>
<div class="l" style="left:180px;padding-left:0.86px;top:133.19px;font-size:11px;letter-spacing:0.000px;color:#5e5e5e">&amp;</div>
<div class="l" style="left:192px;padding-left:0.22px;top:133.19px;font-size:11px;letter-spacing:0.176px;color:#5e5e5e">Columns</div>
<div class="l" style="left:365px;padding-left:0.82px;top:133.19px;font-size:11px;letter-spacing:0.478px;color:#5e5e5e">Merge</div>
<div class="l" style="left:591px;padding-left:0.79px;top:133.19px;font-size:11px;letter-spacing:0.202px;color:#5e5e5e">Cell</div>
<div class="l" style="left:614px;padding-left:0.38px;top:133.19px;font-size:11px;letter-spacing:-0.945px;color:#5e5e5e">Size</div>
<div class="l" style="left:851px;padding-left:0.09px;top:133.19px;font-size:11px;letter-spacing:0.481px;color:#5e5e5e">Alignment</div>
<div class="l" style="left:870.6px;top:57.6px;height:26px;font-size:19.6px;line-height:26px;color:#4a78b2;font-weight:bold">A</div>
<div class="l" style="left:981.2px;top:62.8px;height:20px;font-size:15.7px;line-height:20px;color:#4a78b2;font-weight:bold;transform:scaleX(1.12)">A</div>
<div class="l" style="left:981.6px;top:77px;height:20px;font-size:15.7px;line-height:20px;color:#a272b2;font-weight:bold;transform:scaleX(1.1)">Z</div>
<div class="red" style="left:495.4px;top:28.5px;width:66.6px;height:33.1px;border-width:4.6px"></div>
<div class="red" style="left:403.4px;top:54.2px;width:53px;height:89.6px"></div>
<!-- document -->
<div class="abs" style="left:125px;top:213px;width:11px;height:11px;border:1px solid #9c9c9c;background:#fff"></div>
<svg width="1029" height="525" viewBox="0 0 1029 525" style="pointer-events:none">
<path d="M131.5,215.6 L131.5,223.4 M127.6,219.5 L135.4,219.5" stroke="#555" stroke-width="1" fill="none"/>
<path d="M130,217 L131.5,215.4 L133,217 M130,222 L131.5,223.6 L133,222 M129,218 L127.4,219.5 L129,221 M134,218 L135.6,219.5 L134,221" stroke="#555" stroke-width="1" fill="none"/>
<rect x="812.5" y="440.5" width="7" height="7" fill="#fff" stroke="#9a9a9a" stroke-width="1"/>
</svg>
<div class="ln" style="left:138px;top:226px;width:674px;height:1px"></div>
<div class="ln" style="left:138px;top:262px;width:674px;height:1px"></div>
<div class="ln" style="left:138px;top:297px;width:674px;height:1px"></div>
<div class="ln" style="left:138px;top:333px;width:674px;height:1px"></div>
<div class="ln" style="left:138px;top:368px;width:674px;height:1px"></div>
<div class="ln" style="left:138px;top:404px;width:674px;height:1px"></div>
<div class="ln" style="left:138px;top:439px;width:674px;height:1px"></div>
<div class="ln" style="left:138px;top:226px;width:1px;height:214px"></div>
<div class="ln" style="left:214px;top:226px;width:1px;height:214px"></div>
<div class="ln" style="left:561px;top:226px;width:1px;height:214px"></div>
<div class="ln" style="left:811px;top:226px;width:1px;height:214px"></div>
<div class="ln" style="left:150px;top:370px;width:64px;height:33px;background:#c8c8c8"></div>
<div class="c" style="left:149.6px;top:227.88px">STT</div>
<div class="c" style="left:226.4px;top:227.88px">Họ tên</div>
<div class="c" style="left:573.2px;top:227.88px">Ngày sinh</div>
<div class="c" style="left:149.6px;top:263.48px">1</div>
<div class="c" style="left:226.4px;top:263.48px">Nguyễn Trịnh Xuân Hân</div>
<div class="c" style="left:573.2px;top:263.48px">09/12/1996</div>
<div class="c" style="left:149.6px;top:298.88px">2</div>
<div class="c" style="left:226.4px;top:298.88px">Phạm Ngọc Thùy Miên</div>
<div class="c" style="left:573.2px;top:298.88px">20/06/1997</div>
<div class="c" style="left:149.6px;top:334.48px">3</div>
<div class="c" style="left:226.4px;top:334.48px">Trương Công Tuấn Anh</div>
<div class="c" style="left:573.2px;top:334.48px">03/01/1999</div>
<div class="c" style="left:149.6px;top:369.48px">4</div>
<div class="c" style="left:226.4px;top:369.48px">Trần Tố Trinh</div>
<div class="c" style="left:573.2px;top:369.48px">16/08/1998</div>
<div class="c" style="left:149.6px;top:404.68px">5</div>
<div class="c" style="left:226.4px;top:404.68px">Nguyễn Hoài Xuân</div>
<div class="c" style="left:573.2px;top:404.68px">14/02/2000</div>
</body></html>
